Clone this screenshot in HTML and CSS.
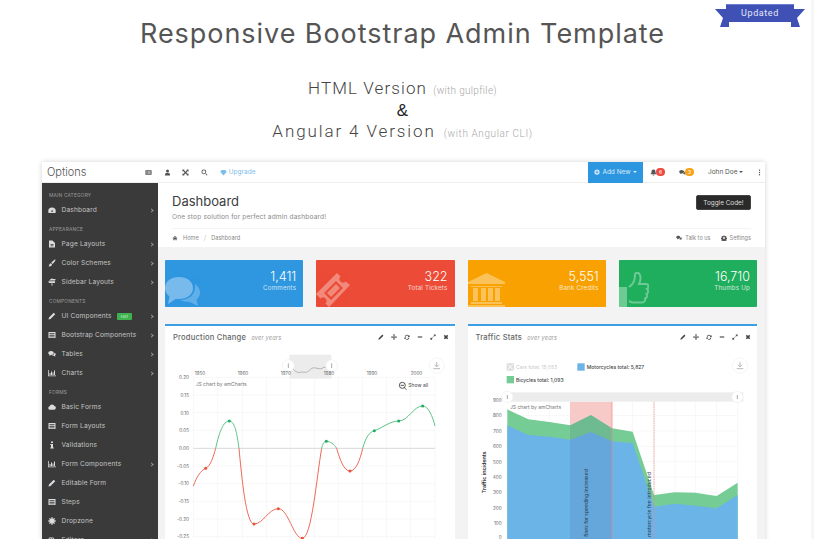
FILE: index.html
```html
<!DOCTYPE html>
<html lang="en">
<head>
<meta charset="UTF-8">
<meta name="viewport" content="width=device-width, initial-scale=1.0">
<title>Responsive Bootstrap Admin Template</title>
<link rel="stylesheet" href="styles.css">
</head>
<body>

<svg class="sprites" width="0" height="0">
  <symbol id="i-list" viewBox="0 0 16 16"><path d="M1 3h14v10H1zM3 5v1h2V5zm3 0v1h7V5zM3 8v1h2V8zm3 0v1h7V8zm-3 2.500v1h2v-1zm3 0v1h7v-1z" fill-rule="evenodd"/></symbol>
  <symbol id="i-user" viewBox="0 0 16 16"><circle cx="8" cy="4.500" r="3.500"/><path d="M2 15c0-5 2-6.500 6-6.500s6 1.500 6 6.500z"/></symbol>
  <symbol id="i-cross" viewBox="0 0 16 16"><path d="M1 1h5L4.500 2.500 8 6l3.500-3.500L10 1h5v5l-1.500-1.500L10 8l3.500 3.500L15 10v5h-5l1.500-1.500L8 10l-3.500 3.500L6 15H1v-5l1.500 1.500L6 8 2.500 4.500 1 6z"/></symbol>
  <symbol id="i-search" viewBox="0 0 16 16"><path d="M6.500 1a5.500 5.500 0 1 1 0 11 5.500 5.500 0 0 1 0-11zm0 2a3.500 3.500 0 1 0 0 7 3.500 3.500 0 0 0 0-7z" fill-rule="evenodd"/><path d="M10 11.500l1.500-1.500 3.500 3.500-1.500 1.500z"/></symbol>
  <symbol id="i-diamond" viewBox="0 0 16 16"><path d="M4 2h8l3.500 4.500L8 15 .5 6.500z"/></symbol>
  <symbol id="i-plus" viewBox="0 0 16 16"><path d="M8 1a7 7 0 1 1 0 14A7 7 0 0 1 8 1zM7 4v3H4v2h3v3h2V9h3V7H9V4z" fill-rule="evenodd"/></symbol>
  <symbol id="i-bell" viewBox="0 0 16 16"><path d="M8 1c3 0 4.500 2 4.500 5 0 3 1 4.500 2.500 6H1c1.500-1.500 2.500-3 2.500-6 0-3 1.500-5 4.500-5zM6 13h4a2 2 0 0 1-4 0z"/></symbol>
  <symbol id="i-comments" viewBox="0 0 16 16"><path d="M6 2c3 0 5.500 1.700 5.500 4S9 10 6 10L2.500 12l1-2.500C1.700 9 .5 7.600.5 6 .5 3.700 3 2 6 2z"/><path d="M12.500 5.500c2 .6 3 1.800 3 3.200 0 1-.6 1.900-1.500 2.400l.8 2.400-3.200-1.800c-1.500 0-2.800-.5-3.600-1.300 2.800-.3 4.800-2.300 4.500-4.900z"/></symbol>
  <symbol id="i-dots" viewBox="0 0 16 16"><circle cx="8" cy="3" r="1.600"/><circle cx="8" cy="8" r="1.600"/><circle cx="8" cy="13" r="1.600"/></symbol>
  <symbol id="i-home" viewBox="0 0 16 16"><path d="M8 2l7 6.500-1 1L8 4 2 9.500l-1-1zM3.500 9.500L8 5.500l4.500 4V14h-3v-3h-3v3h-3z"/></symbol>
  <symbol id="i-gear" viewBox="0 0 16 16"><path d="M6.500 1h3l.4 2 1.300.6 1.800-1.100 2 2-1.100 1.800.6 1.300 2 .4v3l-2 .4-.6 1.300 1.100 1.800-2 2-1.800-1.100-1.300.6-.4 2h-3l-.4-2-1.300-.6-1.800 1.100-2-2 1.100-1.800-.6-1.300-2-.4v-3l2-.4.6-1.300L1.300 4.500l2-2 1.800 1.100 1.300-.6zM8 5.500a2.500 2.500 0 1 0 0 5 2.500 2.500 0 0 0 0-5z" fill-rule="evenodd"/></symbol>
  <symbol id="i-gauge" viewBox="0 0 16 16"><path d="M8 3a7.500 7.500 0 0 1 7.500 7.500c0 1.200-.3 2.500-.8 3.500H1.300C.8 13 .5 11.700.5 10.500A7.500 7.500 0 0 1 8 3zm3 3.500L8.500 9.300a1.500 1.500 0 1 0 1 .9z" fill-rule="evenodd"/></symbol>
  <symbol id="i-file" viewBox="0 0 16 16"><path d="M2 1h7l5 5v9H2zM5 8v1.500h6V8zm0 3v1.500h6V11z" fill-rule="evenodd"/></symbol>
  <symbol id="i-brush" viewBox="0 0 16 16"><path d="M15 1c.5 2-3.500 7-6 9L6.500 7.500C8.500 5 13 .5 15 1zM5.500 8.500l2.500 2.500c0 2.500-3 4.500-7 4 1.500-1 1-2 1.500-3.500.5-1.500 2-3 3-3z"/></symbol>
  <symbol id="i-sign" viewBox="0 0 16 16"><path d="M7 1h2v1h5l1.500 1.500L14 5H2zM1 6.500h13v3.500H2.500L1 8.500zM7 11h2v4H7z"/></symbol>
  <symbol id="i-pencil" viewBox="0 0 16 16"><path d="M11.500 1.500l3 3L5 14l-4 1 1-4zM12.500 1l2.500 2.500"/></symbol>
  <symbol id="i-table" viewBox="0 0 16 16"><path d="M1 2h14v12H1zM3 4.500v2h10v-2zM3 8v1.500h10V8zm0 3v1.500h10V11z" fill-rule="evenodd"/></symbol>
  <symbol id="i-bars" viewBox="0 0 16 16"><path d="M0 2h1.500v11H16v1.500H0zM3 8h2v4H3zm3-3h2v7H6zm3 2h2v5H9zm3-4h2v9h-2z"/></symbol>
  <symbol id="i-cloud" viewBox="0 0 16 16"><path d="M4 13.500a3.500 3.500 0 0 1-.7-6.900A5 5 0 0 1 12.800 6 3.800 3.800 0 0 1 12 13.500z"/></symbol>
  <symbol id="i-info" viewBox="0 0 16 16"><path d="M6 1h4v3H6zM4.500 6H10v7h1.500v2h-7v-2H6V8H4.500z"/></symbol>
  <symbol id="i-burst" viewBox="0 0 16 16"><circle cx="8" cy="8" r="5.500"/><path d="M7 0h2v3H7zM7 13h2v3H7zM0 7h3v2H0zM13 7h3v2h-3zM2 3l1-1 2 2-1 1zM13 2l1 1-2 2-1-1zM2 13l2-2 1 1-2 2zM11 12l1-1 2 2-1 1z"/></symbol>
  <symbol id="i-font" viewBox="0 0 16 16"><path d="M2 3h9l1 3h-1.500L9 4.500H7.500V12l2 1v1h-6v-1l2-1V4.500H4L2.500 6H1zM12 9l3 3-3 3z"/></symbol>
  <symbol id="i-move" viewBox="0 0 16 16"><path d="M8 0l3 3.500H9V7h3.500V5l3.500 3-3.500 3V9H9v3.500h2L8 16l-3-3.500h2V9H3.500v2L0 8l3.500-3v2H7V3.500H5z"/></symbol>
  <symbol id="i-refresh" viewBox="0 0 16 16"><path d="M8 2a6 6 0 0 1 5 2.700L15 3v5.500H9.500L11.500 6.500A3.700 3.700 0 0 0 4.500 7H2.100A6 6 0 0 1 8 2zM.9 9h5.600l-2 2a3.700 3.700 0 0 0 7-.4h2.400A6 6 0 0 1 3 12.300L1 14z"/></symbol>
  <symbol id="i-minus" viewBox="0 0 16 16"><path d="M2 6.500h12v3H2z"/></symbol>
  <symbol id="i-expand" viewBox="0 0 16 16"><path d="M9.500 1H15v5.500L13 4.500 10 7.500 8.500 6l3-3zM6 8.500L7.500 10l-3 3L6.500 15H1V9.500L3 11.500z"/></symbol>
  <symbol id="i-close" viewBox="0 0 16 16"><path d="M2 5l3-3 3 3 3-3 3 3-3 3 3 3-3 3-3-3-3 3-3-3 3-3z"/></symbol>
</svg>

<header class="hero">
  <h1 class="hero-title">Responsive Bootstrap Admin Template</h1>
  <p class="hero-line">HTML Version <small class="hero-note">(with gulpfile)</small></p>
  <p class="hero-amp">&amp;</p>
  <p class="hero-line hero-line-second">Angular 4 Version <small class="hero-note hero-note-second">(with Angular CLI)</small></p>
</header>

<svg class="ribbon" viewBox="0 0 90 23" width="90" height="23">
  <path d="M0 5h14v18H5l3-9z" fill="#3f51b5"/>
  <path d="M90 5H76v18h9l-3-9z" fill="#3f51b5"/>
  <rect x="11" y="0" width="68" height="18" fill="#3f51b5"/>
  <rect x="11" y="0" width="68" height="1" fill="#6d7bd0"/>
  <text x="45" y="12" class="ribbon-text" text-anchor="middle">Updated</text>
</svg>

<div class="frame">
  <nav class="topbar">
    <div class="brand">Options</div>
    <div class="topbar-tools">
      <svg class="icon"><use href="#i-list"/></svg>
      <svg class="icon"><use href="#i-user"/></svg>
      <svg class="icon"><use href="#i-cross"/></svg>
      <svg class="icon"><use href="#i-search"/></svg>
      <a class="upgrade"><svg class="icon"><use href="#i-diamond"/></svg>Upgrade</a>
    </div>
    <a class="add-new"><svg class="icon"><use href="#i-plus"/></svg>Add New <span class="caret"></span></a>
    <div class="topbar-right">
      <span class="notify"><svg class="icon"><use href="#i-bell"/></svg><b class="count count-red">6</b></span>
      <span class="notify"><svg class="icon"><use href="#i-comments"/></svg><b class="count count-orange">3</b></span>
      <span class="user">John Doe <span class="caret"></span></span>
      <svg class="icon"><use href="#i-dots"/></svg>
    </div>
  </nav>

  <div class="layout">
    <aside class="sidebar">
      <div class="cat">MAIN CATEGORY</div>
      <a class="item"><svg class="icon"><use href="#i-gauge"/></svg>Dashboard<i class="chev"></i></a>
      <div class="cat">APPEARANCE</div>
      <a class="item"><svg class="icon"><use href="#i-file"/></svg>Page Layouts<i class="chev"></i></a>
      <a class="item"><svg class="icon"><use href="#i-brush"/></svg>Color Schemes<i class="chev"></i></a>
      <a class="item"><svg class="icon"><use href="#i-sign"/></svg>Sidebar Layouts<i class="chev"></i></a>
      <div class="cat">COMPONENTS</div>
      <a class="item"><svg class="icon"><use href="#i-pencil"/></svg>UI Components<span class="tag">Hot</span><i class="chev"></i></a>
      <a class="item"><svg class="icon"><use href="#i-table"/></svg>Bootstrap Components<i class="chev"></i></a>
      <a class="item"><svg class="icon"><use href="#i-comments"/></svg>Tables<i class="chev"></i></a>
      <a class="item"><svg class="icon"><use href="#i-bars"/></svg>Charts<i class="chev"></i></a>
      <div class="cat">FORMS</div>
      <a class="item"><svg class="icon"><use href="#i-cloud"/></svg>Basic Forms</a>
      <a class="item"><svg class="icon"><use href="#i-table"/></svg>Form Layouts</a>
      <a class="item"><svg class="icon"><use href="#i-info"/></svg>Validations</a>
      <a class="item"><svg class="icon"><use href="#i-bars"/></svg>Form Components<i class="chev"></i></a>
      <a class="item"><svg class="icon"><use href="#i-pencil"/></svg>Editable Form</a>
      <a class="item"><svg class="icon"><use href="#i-table"/></svg>Steps</a>
      <a class="item"><svg class="icon"><use href="#i-burst"/></svg>Dropzone</a>
      <a class="item"><svg class="icon"><use href="#i-font"/></svg>Editors<i class="chev"></i></a>
    </aside>

    <main class="content">
      <section class="page-head">
        <div class="page-title-row">
          <div>
            <h2 class="page-title">Dashboard</h2>
            <p class="page-sub">One stop solution for perfect admin dashboard!</p>
          </div>
          <button class="toggle-btn">Toggle Code!</button>
        </div>
        <div class="crumbs">
          <svg class="icon"><use href="#i-home"/></svg><span>Home</span><span class="crumb-sep">/</span><span>Dashboard</span>
          <span class="crumb-links">
            <span><svg class="icon"><use href="#i-comments"/></svg>Talk to us</span>
            <span><svg class="icon"><use href="#i-gear"/></svg>Settings</span>
          </span>
        </div>
      </section>

      <section class="cards">
        <div class="card card-blue">
          <svg class="card-icon" viewBox="0 0 35 30" width="35" height="30">
            <path d="M14 0c8 0 14 4.500 14 11S22 22 14 22c-1 0-2 0-3-.2L3 27l1.500-7.500C1.700 17.500 0 14.500 0 11 0 4.500 6 0 14 0z"/>
            <path d="M30 7c3 2 5 5 5 8.500 0 3-1.500 5.500-3.500 7L33 29l-8-4c-4 0-7.500-1-10-2 9 0 16-5 15-16z" opacity=".7"/>
          </svg>
          <div class="card-text"><strong>1,411</strong><span>Comments</span></div>
        </div>
        <div class="card card-red">
          <svg class="card-icon" viewBox="0 0 34 34" width="34" height="34">
            <path d="M21 0l3.500 3.500a3.500 3.500 0 0 0 5 5L34 12 13 34l-3.500-3.500a3.500 3.500 0 0 0-5-5L0 21zM20 8L8 20l7 7 12-12z" fill-rule="evenodd"/>
            <path d="M20 11l4 4-9 9-4-4z"/>
          </svg>
          <div class="card-text"><strong>322</strong><span>Total Tickets</span></div>
        </div>
        <div class="card card-orange">
          <svg class="card-icon" viewBox="0 0 37 34" width="37" height="34">
            <path d="M18.500 0L37 9v2H0V9zM3 13h31v1H3zM5 15h5v13H5zM13 15h5v13h-5zM20 15h5v13h-5zM27 15h5v13h-5zM3 29h31v2H3zM0 32h37v2H0z"/>
          </svg>
          <div class="card-text"><strong>5,551</strong><span>Bank Credits</span></div>
        </div>
        <div class="card card-green">
          <svg class="card-icon" viewBox="0 0 30 35" width="30" height="35">
            <rect x="0" y="15" width="8" height="20"/>
            <path d="M10 15c5-3 6-8 6-12 0-3 4-3 5 0 1 3 0 7-1 9h7c3 0 3 4 1 5 1.500 1 1.500 4-.5 5 1 1.500.5 4-1.500 4.500.5 2-.5 4-3 4H14c-2 0-3-1-4-1.500" fill="none" stroke="#fff" stroke-width="2"/>
          </svg>
          <div class="card-text"><strong>16,710</strong><span>Thumbs Up</span></div>
        </div>
      </section>

      <section class="panels">
        <article class="panel">
          <header class="panel-head">
            <h3>Production Change <em>over years</em></h3>
            <div class="panel-tools">
              <svg class="icon"><use href="#i-pencil"/></svg>
              <svg class="icon"><use href="#i-move"/></svg>
              <svg class="icon"><use href="#i-refresh"/></svg>
              <svg class="icon"><use href="#i-minus"/></svg>
              <svg class="icon"><use href="#i-expand"/></svg>
              <svg class="icon"><use href="#i-close"/></svg>
            </div>
          </header>
          <!-- chart units are three times the screen pixels -->
          <svg class="chart" viewBox="15 84 868.500 573" preserveAspectRatio="xMinYMin slice">
            <g class="grid">
              <path d="M100 172H825M100 225H825M100 278H825M100 331H825M100 438H825M100 491H825M100 544H825M100 597H825M100 650H825"/>
              <path d="M172 172V657M248 172V657M320 172V657M392 172V657M464 172V657M535 172V657M608 172V657M680 172V657M752 172V657M825 172V657M100 172V657"/>
            </g>
            <path d="M100 385H825" stroke="#d9d9d9" stroke-width="3"/>
            <rect x="388" y="104" width="126" height="72" fill="#ececec"/>
            <path d="M388 135c12 12 20 25 32 22s20 5 30-8 28 2 36-4 18-2 28 0" fill="none" stroke="#9a9a9a" stroke-width="2"/>
            <circle class="handle" cx="385" cy="137" r="18"/>
            <circle class="handle" cx="515" cy="137" r="18"/>
            <path d="M385 130v14M515 130v14" stroke="#aaa" stroke-width="3"/>
            <g class="axis">
              <text x="104" y="166">1950</text><text x="233" y="166">1960</text><text x="362" y="166">1970</text><text x="491" y="166">1980</text><text x="620" y="166">1990</text><text x="752" y="166">2000</text>
            </g>
            <g class="axis" text-anchor="end">
              <text x="87" y="177">0.20</text><text x="87" y="231">0.15</text><text x="87" y="284">0.10</text><text x="87" y="337">0.05</text><text x="87" y="390">0.00</text><text x="87" y="443">-0.05</text><text x="87" y="496">-0.10</text><text x="87" y="549">-0.15</text><text x="87" y="602">-0.20</text><text x="87" y="655">-0.25</text>
            </g>
            <text class="credit" x="107" y="199">JS chart by amCharts</text>
            <circle cx="727" cy="196" r="9" fill="none" stroke="#333" stroke-width="2.500"/>
            <path d="M733 203l6 6M722 196h10" stroke="#333" stroke-width="2.500"/>
            <text class="credit credit-dark" x="745" y="201">Show all</text>
            <path d="M100 498C110 470 122 452 137 445C152 438 160 410 167 385" class="line-red"/>
            <path d="M167 385C178 335 190 303 208 303C226 303 232 350 237 385" class="line-green"/>
            <path d="M237 385C245 470 258 612 282 612C310 612 325 566 355 566C385 566 400 655 427 655C455 655 470 470 485 385" class="line-red"/>
            <path d="M485 385C488 372 492 364 499 364C510 364 522 372 530 385" class="line-green"/>
            <path d="M530 385C540 420 552 453 570 453C588 453 600 420 608 385" class="line-red"/>
            <path d="M608 385C618 350 628 337 643 332C665 325 690 303 716 303C745 303 760 258 788 258C805 258 818 290 825 318" class="line-green"/>
            <g fill="#e8503a">
              <circle cx="137" cy="445" r="4.500"/><circle cx="282" cy="612" r="4.500"/><circle cx="355" cy="566" r="4.500"/><circle cx="427" cy="655" r="4.500"/><circle cx="570" cy="453" r="4.500"/>
            </g>
            <g fill="#1fad5f">
              <circle cx="208" cy="303" r="4.500"/><circle cx="499" cy="364" r="4.500"/><circle cx="643" cy="332" r="4.500"/><circle cx="716" cy="303" r="4.500"/><circle cx="788" cy="258" r="4.500"/>
            </g>
            <circle class="handle" cx="830" cy="137" r="23"/>
            <path d="M830 126v14M824 134l6 7 6-7M820 146h20" stroke="#bbb" stroke-width="3" fill="none"/>
          </svg>
        </article>

        <article class="panel">
          <header class="panel-head">
            <h3>Traffic Stats <em>over years</em></h3>
            <div class="panel-tools">
              <svg class="icon"><use href="#i-pencil"/></svg>
              <svg class="icon"><use href="#i-move"/></svg>
              <svg class="icon"><use href="#i-refresh"/></svg>
              <svg class="icon"><use href="#i-minus"/></svg>
              <svg class="icon"><use href="#i-expand"/></svg>
              <svg class="icon"><use href="#i-close"/></svg>
            </div>
          </header>
          <svg class="chart" viewBox="24 84 868.500 573" preserveAspectRatio="xMinYMin slice">
            <g class="grid">
              <path d="M142 287H833M142 333H833M142 379H833M142 425H833M142 471H833M142 517H833M142 563H833M142 609H833"/>
              <path d="M205 245V657M268 245V657M331 245V657M393 245V657M456 245V657M518 245V657M582 245V657M645 245V657M706 245V657M770 245V657M833 245V657"/>
            </g>
            <rect x="330" y="245" width="126" height="412" fill="#f7c9c7"/>
            <path d="M142 268L205 298 268 306 331 316 393 285 456 325 518 335 582 525 645 517 706 518 770 528 833 488V657H142z" fill="#76cc95"/>
            <path d="M142 316L205 345 268 350 331 359 393 336 456 364 518 369 582 560 645 551 706 557 770 565 833 525V657H142z" fill="#6bb4e8"/>
            <!-- the band only darkens the areas, its upper part stays pink -->
            <path d="M330 316L393 285 456 325V657H330z" fill="#3a4a80" opacity=".13"/>
            <path d="M456 245V657" stroke="#e88" stroke-width="2"/>
            <path d="M582 245V657" stroke="#e88" stroke-width="2" stroke-dasharray="5 2"/>
            <rect x="142" y="217" width="708" height="28" fill="#ececec"/>
            <circle class="handle" cx="142" cy="231" r="17"/>
            <circle class="handle" cx="832" cy="231" r="17"/>
            <path d="M142 225v12M832 225v12" stroke="#aaa" stroke-width="3"/>
            <rect x="141" y="131" width="20" height="20" fill="#dedede" stroke="#c4c4c4"/>
            <path d="M143 133l16 16M159 133l-16 16" stroke="#fff" stroke-width="3"/>
            <text class="legend legend-off" x="168" y="147">Cars total: 15,053</text>
            <rect x="352" y="130" width="22" height="22" fill="#6bb4e8"/>
            <text class="legend" x="380" y="147">Motorcycles total: 5,827</text>
            <rect x="140" y="168" width="22" height="22" fill="#76cc95"/>
            <text class="legend" x="168" y="185">Bicycles total: 1,093</text>
            <g class="axis" text-anchor="end">
              <text x="125" y="246">900</text><text x="125" y="292">800</text><text x="125" y="338">700</text><text x="125" y="384">600</text><text x="125" y="431">500</text><text x="125" y="477">400</text><text x="125" y="522">300</text><text x="125" y="569">200</text><text x="125" y="615">100</text><text x="125" y="658">0</text>
            </g>
            <text class="credit" x="150" y="268">JS chart by amCharts</text>
            <text class="axis-title" transform="translate(78 520) rotate(-90)">Traffic incidents</text>
            <text class="band-label" transform="translate(385 650) rotate(-90)">fines for speeding increased</text>
            <text class="band-label band-label-wide" transform="translate(573 650) rotate(-90)">motorcycle fee introduced</text>
            <circle class="handle" cx="840" cy="137" r="23"/>
            <path d="M840 126v14M834 134l6 7 6-7M830 146h20" stroke="#bbb" stroke-width="3" fill="none"/>
          </svg>
        </article>
      </section>
    </main>
  </div>
</div>

</body>
</html>
```

FILE: styles.css
```css
html, body {
  height: 539px;
  overflow: hidden;
}
body {
  margin: 0;
  padding: 0;
  background: #fff;
  font-family: Inter, "Noto Sans", sans-serif;
  color: #444;
  position: relative;
  border-right: 3px solid #f6f6f6;
  box-sizing: border-box;
}
.sprites {
  position: absolute;
}
.icon {
  width: 9px;
  height: 9px;
  fill: currentColor;
  flex: none;
}

/* heading block */
.hero {
  width: 805px;
  height: 162px;
  padding-top: 17px;
  box-sizing: border-box;
  text-align: center;
}
.hero-title {
  margin: 0;
  font-size: 27px;
  line-height: 34px;
  font-weight: 400;
  letter-spacing: .95px;
  color: #555;
}
.hero-line {
  margin: 26px 0 0;
  font-family: Roboto, sans-serif;
  font-size: 17px;
  line-height: 22px;
  font-weight: 300;
  letter-spacing: 1.1px;
  color: #444;
}
.hero-line-second {
  margin-top: 0;
  letter-spacing: 1.9px;
}
.hero-amp {
  margin: 0;
  font-family: "Liberation Sans", sans-serif;
  font-size: 17px;
  line-height: 18px;
  color: #222;
}
.hero-note {
  font-size: 10px;
  letter-spacing: .3px;
  color: #a8a8a8;
  margin-left: 1px;
}
.hero-note-second {
  margin-left: 2px;
  letter-spacing: .6px;
}
.ribbon {
  position: absolute;
  top: 4px;
  left: 715px;
}
.ribbon-text {
  font-family: Roboto, sans-serif;
  font-size: 9px;
  letter-spacing: .6px;
  fill: #e4e7f7;
}

/* app window */
.frame {
  margin-left: 42px;
  width: 723px;
  height: 400px;
  background: #f3f3f3;
  box-shadow: 0 0 5px rgba(0, 0, 0, .18);
}
.topbar {
  height: 21px;
  box-sizing: border-box;
  background: #fff;
  display: flex;
  align-items: center;
  border-bottom: 1px solid #eee;
  font-size: 6.5px;
  color: #555;
}
.brand {
  width: 103px;
  padding-left: 5px;
  box-sizing: border-box;
  font-size: 11px;
  font-weight: 300;
  color: #555;
}
.topbar-tools {
  display: flex;
  align-items: center;
  flex: 1;
}
.topbar-tools .icon {
  width: 7px;
  height: 7px;
  margin-right: 11.7px;
}
.upgrade {
  display: flex;
  align-items: center;
  color: #7dbdec;
}
.upgrade .icon {
  margin-right: 2px;
}
.add-new {
  width: 55px;
  height: 21px;
  background: #2d96e0;
  color: #d6ecfb;
  display: flex;
  align-items: center;
  justify-content: center;
  gap: 2px;
}
.add-new .icon {
  width: 6px;
  height: 6px;
}
.caret {
  display: inline-block;
  border-top: 2px solid currentColor;
  border-left: 2px solid transparent;
  border-right: 2px solid transparent;
  vertical-align: middle;
}
.topbar-right {
  width: 122px;
  padding-left: 7px;
  box-sizing: border-box;
  display: flex;
  align-items: center;
  color: #555;
}
.topbar-right .icon {
  width: 7px;
  height: 7px;
}
.notify {
  display: flex;
  align-items: center;
  width: 29px;
}
.count {
  width: 9px;
  height: 8px;
  border-radius: 4px;
  margin-left: -1px;
  color: #fff;
  font-size: 5px;
  font-weight: 400;
  line-height: 8px;
  text-align: center;
}
.count-red {
  background: #ee4a3d;
}
.count-orange {
  background: #f9a31a;
}
.user {
  width: 48px;
  font-size: 6.5px;
}

.layout {
  display: flex;
  height: 379px;
}
.sidebar {
  width: 116px;
  flex: none;
  padding-top: 2.5px;
  box-sizing: border-box;
  background-color: #3a3a3a;
  color: #c4c4c4;
  overflow: hidden;
  font-size: 6.6px;
}
.cat {
  height: 15px;
  line-height: 19px;
  padding-left: 7px;
  font-size: 4.8px;
  letter-spacing: .2px;
  color: #9c9c9c;
}
.item {
  height: 19px;
  display: flex;
  align-items: center;
  padding: 0 5px 0 5.5px;
  letter-spacing: .15px;
}
.item .icon {
  width: 8px;
  height: 8px;
  margin-right: 6px;
  color: #dcdcdc;
}
.tag {
  margin-left: 5px;
  background: #3fb24f;
  color: #d9f3dc;
  font-size: 4px;
  padding: 1px 4px;
  border-radius: 1px;
}
.chev {
  margin-left: auto;
  width: 2px;
  height: 2px;
  border-top: 1px solid #999;
  border-right: 1px solid #999;
  transform: rotate(45deg);
}

.content {
  flex: 1;
  min-width: 0;
}
.page-head {
  height: 64px;
  background: #fff;
  padding: 0 14px;
  box-sizing: border-box;
}
.page-title-row {
  height: 46px;
  box-sizing: border-box;
  display: flex;
  justify-content: space-between;
  align-items: flex-start;
  border-bottom: 1px solid #f4f4f4;
}
.page-title {
  margin: 10px 0 0;
  font-size: 13px;
  line-height: 16px;
  font-weight: 400;
  color: #3c3c3c;
}
.page-sub {
  margin: 4px 0 0;
  font-size: 6.6px;
  letter-spacing: .15px;
  color: #8a8a8a;
}
.toggle-btn {
  margin-top: 12px;
  width: 55px;
  height: 15px;
  padding: 0;
  border: 1px solid #444;
  border-radius: 2px;
  background: #2a2a2a;
  color: #ddd;
  font-family: inherit;
  font-size: 6.4px;
}
.crumbs {
  height: 17px;
  display: flex;
  align-items: center;
  gap: 5px;
  font-size: 5.6px;
  color: #888;
}
.crumbs .icon {
  width: 6px;
  height: 6px;
  color: #555;
}
.crumb-sep {
  color: #ccc;
  font-size: 7px;
}
.crumb-links {
  margin-left: auto;
  display: flex;
  gap: 10px;
}
.crumb-links span {
  display: flex;
  align-items: center;
  gap: 3px;
}

.cards {
  display: grid;
  grid-template-columns: repeat(4, 1fr);
  gap: 13px;
  padding: 13px 8px 0 7px;
}
.card {
  height: 47px;
  border-radius: 1px;
  display: flex;
  justify-content: space-between;
  align-items: flex-end;
  color: #fff;
  overflow: hidden;
}
.card-blue {
  background: #2f96e0;
}
.card-red {
  background: #ec4c37;
}
.card-orange {
  background: #f8a100;
}
.card-green {
  background: #1fae5d;
}
.card-icon {
  fill: #fff;
  opacity: .35;
  margin-bottom: 0;
}
.card-text {
  align-self: flex-start;
  padding: 9px 7px 0 0;
  text-align: right;
}
.card-text strong {
  display: block;
  font-size: 12.5px;
  line-height: 15px;
  font-weight: 300;
}
.card-text span {
  display: block;
  font-size: 6.2px;
  line-height: 8px;
  letter-spacing: .2px;
  opacity: .75;
}

.panels {
  display: grid;
  grid-template-columns: 1fr 1fr;
  gap: 13px;
  padding: 17px 8px 0 7px;
}
.panel {
  height: 215px;
  background: #fff;
  border-top: 2px solid #3d9ee4;
  overflow: hidden;
}
.panel-head {
  height: 22px;
  display: flex;
  align-items: center;
  justify-content: space-between;
  padding: 0 6px 0 8px;
}
.panel-head h3 {
  margin: 0;
  font-size: 7.6px;
  font-weight: 500;
  letter-spacing: .2px;
  color: #666;
}
.panel-head em {
  margin-left: 3px;
  font-size: 5.6px;
  font-weight: 400;
  color: #999;
}
.panel-tools {
  display: flex;
  gap: 7px;
  color: #444;
}
.panel-tools .icon {
  width: 6px;
  height: 6px;
}

/* amCharts style drawings, in the enlarged chart units */
.chart {
  display: block;
  width: 289.5px;
  height: 191px;
  font-family: Inter, sans-serif;
}
.grid path {
  fill: none;
  stroke: #efefef;
  stroke-width: 1.5;
}
.axis text {
  font-size: 14px;
  fill: #666;
}
.credit {
  font-size: 15px;
  fill: #777;
}
.credit-dark {
  fill: #444;
}
.handle {
  fill: #fff;
  stroke: #eee;
  stroke-width: 2;
}
.line-red,
.line-green {
  fill: none;
  stroke-width: 3;
}
.line-red {
  stroke: #ee6a58;
}
.line-green {
  stroke: #5cc488;
}
.legend {
  font-size: 15px;
  font-weight: 500;
  fill: #444;
}
.legend-off {
  font-weight: 400;
  fill: #c8c8c8;
}
.axis-title {
  font-size: 16px;
  font-weight: 600;
  fill: #333;
}
.band-label {
  font-size: 15px;
  fill: #2d3b50;
}
.band-label-wide {
  letter-spacing: .3px;
}
```
